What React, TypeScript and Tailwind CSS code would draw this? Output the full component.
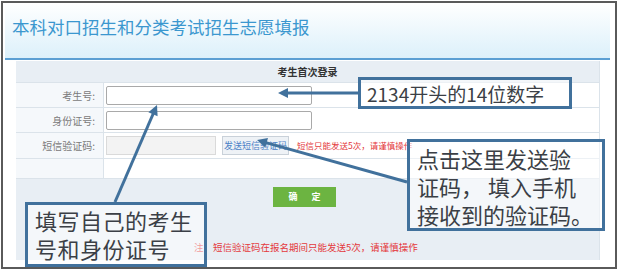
import React from 'react';

const cjk = "font-['Noto_Sans_CJK_SC','Noto_Sans',sans-serif]";

function Row({ label, h, children }: { label: string; h: string; children?: React.ReactNode }) {
  return (
    <div className={`flex border-t border-[#dbe3ea] ${h}`}>
      <div className="w-[88px] shrink-0 bg-[#f5f8fb] border-r border-[#dbe3ea] flex items-center justify-end pr-[8px] text-[10px] text-[#7a7a7a]">
        {label}
      </div>
      <div className="flex-1 bg-white flex items-center pl-[2px]">{children}</div>
    </div>
  );
}

function Callout({ className, children }: { className: string; children: React.ReactNode }) {
  return (
    <div
      className={`absolute border-[3px] border-[#41719c] bg-white/50 text-[#3b3f46] ${className}`}
    >
      {children}
    </div>
  );
}

export default function App() {
  return (
    <div className={`relative w-[618px] h-[276px] bg-white overflow-hidden ${cjk}`}>
      <div className="ml-px mt-px w-[616px] h-[268px] border-2 border-[#5a5a5a] flex flex-col">
        <div className="ml-[2px] w-[605px] h-[57px] shrink-0 bg-gradient-to-b from-white to-[#dcf0fa] border-b-2 border-[#5b9fd3] pl-[7px] pt-[12px]">
          <div className="text-[17.5px] leading-[24px] text-[#3b97cf]">本科对口招生和分类考试招生志愿填报</div>
        </div>

        <div className="ml-[13px] mt-px w-[584px] h-[199px] flex flex-col border-r border-[#dbe3ea]">
          <div className="h-[21px] bg-[#e8eef4] flex items-center justify-center text-[10px] font-bold text-[#333]">
            考生首次登录
          </div>
          <Row label="考生号:" h="h-[25px]">
            <div className="w-[206px] h-[19px] border border-[#a9a9a9] rounded-[2px] bg-white" />
          </Row>
          <Row label="身份证号:" h="h-[25px]">
            <div className="w-[206px] h-[19px] border border-[#a9a9a9] rounded-[2px] bg-white" />
          </Row>
          <Row label="短信验证码:" h="h-[26px]">
            <div className="w-[110px] h-[19px] border border-[#dadada] bg-[#f3f3f3]" />
            <div className="ml-[6px] w-[67px] h-[19px] border border-[#c9d1d9] bg-[#eef2f6] flex items-center justify-center text-[9px] text-[#4a80c6]">
              发送短信验证码
            </div>
            <span className="ml-[8px] text-[8.5px] text-[#e4393c]">短信只能发送5次，请谨慎操作</span>
          </Row>
          <Row label="" h="h-[20px]" />
          <div className="flex-1 bg-[#e8eef4] border-t border-[#dbe3ea] flex flex-col">
            <div className="mt-[8px] ml-[257px] w-[63px] h-[20px] bg-[#6cb441] flex items-center justify-center gap-[14px] text-[9px] font-bold text-white">
              <span>确</span>
              <span>定</span>
            </div>
            <div className="mt-[33px] ml-[178px] text-[9.5px] text-[#e4393c] whitespace-nowrap">
              注：短信验证码在报名期间只能发送5次，请谨慎操作
            </div>
          </div>
        </div>
      </div>

      <svg className="absolute inset-0 pointer-events-none" width="618" height="276">
        <g stroke="#41719c" strokeWidth="3" fill="#41719c">
          <line x1="358" y1="93" x2="286" y2="93" />
          <polygon points="278,93 288,88 288,98" stroke="none" />
          <line x1="407" y1="182" x2="265" y2="142.4" />
          <polygon points="257,140 268,137.9 265.3,147.5" stroke="none" />
          <line x1="115" y1="202" x2="153.5" y2="113" />
          <polygon points="157,105 157.6,116.2 148.4,112.2" stroke="none" />
        </g>
      </svg>

      <Callout className="left-[358px] top-[77px] w-[214px] h-[32px] flex items-center pl-[6px] text-[19px] leading-none">
        2134开头的14位数字
      </Callout>
      <Callout className="left-[407px] top-[139px] w-[198px] h-[92px] pl-[7px] pt-[2px] text-[22px] leading-[28px]">
        <div>点击这里发送验</div>
        <div>证码， 填入手机</div>
        <div>接收到的验证码。</div>
      </Callout>
      <Callout className="left-[25px] top-[202px] w-[182px] h-[65px] pl-[7px] pt-[1px] text-[22px] leading-[28px] tracking-[0.5px]">
        <div>填写自己的考生</div>
        <div>号和身份证号</div>
      </Callout>
    </div>
  );
}
